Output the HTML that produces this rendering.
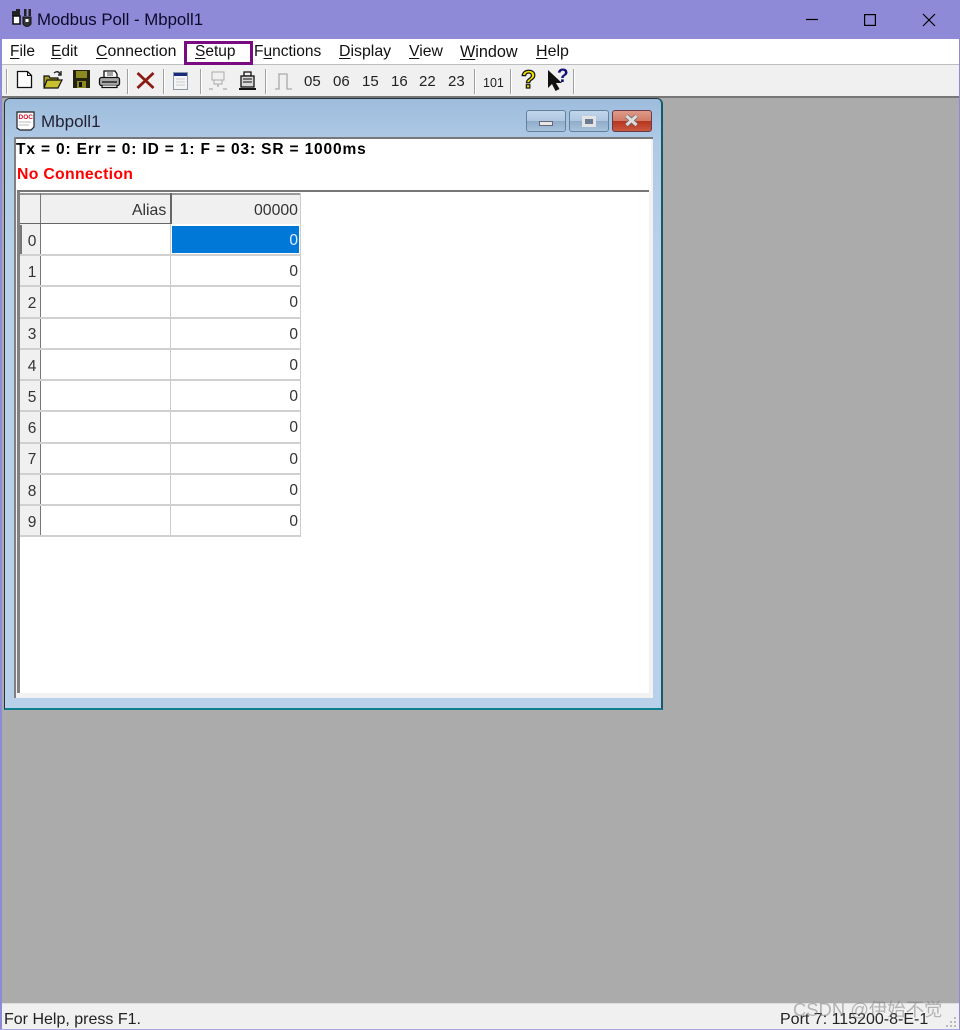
<!DOCTYPE html>
<html><head><meta charset="utf-8"><style>
html,body{margin:0;padding:0;width:960px;height:1030px;overflow:hidden;background:#ababab;font-family:"Liberation Sans","Noto Sans CJK SC",sans-serif;color:#111}
.a{position:absolute}
.t{position:absolute;white-space:nowrap;line-height:18px;font-size:15.500px}
.t u{text-underline-offset:2px}
.tb{position:absolute;top:73px;font-size:15px;line-height:18px;color:#222}
.sep{position:absolute;top:69px;width:1px;height:25px;background:#a0a0a0;border-right:1px solid #fff}
.rh{position:absolute;left:22px;width:20px;text-align:center;font-size:15.500px;line-height:18px;color:#333}
.v{position:absolute;left:171px;width:127px;text-align:right;font-size:15.500px;line-height:18px;color:#333}
.hl{position:absolute;left:20px;width:281px;height:2px;background:#d0d0d0}
.rb{position:absolute;left:20px;width:21px;background:#f0f0f0}
</style></head><body>
<div class="a" style="left:0;top:0;width:960px;height:39px;background:#8e8ad8"></div>
<svg class="a" style="left:10px;top:8px" width="24" height="24" viewBox="0 0 24 24"><path d="M2 3h4v5H2zM6 1h4v7H6zM14 1h2.500v7H14zM18.500 1H21v7h-2.500z" fill="#222"/><path d="M3 8h7v8H3z" fill="#fff" stroke="#111" stroke-width="1.600"/><path d="M13 9h8v7q-4 5-8 0z" fill="#333" stroke="#111"/><path d="M15.500 11h3v3h-3z" fill="#fff"/></svg>
<div class="t" style="left:37px;top:11px;font-size:16.800px;color:#0a0a2a">Modbus Poll - Mbpoll1</div>
<svg class="a" style="left:780px;top:0" width="180" height="39" viewBox="0 0 180 39" fill="none" stroke="#000" stroke-width="1.200"><path d="M26 19.500h12"/><rect x="84.600" y="14.600" width="10.800" height="10.800"/><path d="M143 14l12 12M155 14l-12 12"/></svg>

<div class="a" style="left:0;top:39px;width:960px;height:25px;background:#fff"></div>
<div class="a" style="left:0;top:64px;width:960px;height:1px;background:#bdbdbd"></div>
<div class="a" style="left:0;top:65px;width:960px;height:31px;background:#f0f0f0"></div>
<div class="a" style="left:0;top:96px;width:960px;height:2px;background:#777"></div>
<div class="a" style="left:0;top:39px;width:2px;height:991px;background:#8e8ad8"></div>
<div class="a" style="left:959px;top:39px;width:1px;height:991px;background:#8e8ad8"></div>

<div class="t" style="left:10px;top:43px"><u>F</u>ile</div>
<div class="t" style="left:51px;top:43px"><u>E</u>dit</div>
<div class="t" style="left:96px;top:43px;font-size:15.900px"><u>C</u>onnection</div>
<div class="t" style="left:195px;top:43px"><u>S</u>etup</div>
<div class="t" style="left:254px;top:43px;font-size:15.500px">F<u>u</u>nctions</div>
<div class="t" style="left:339px;top:43px;font-size:15.900px"><u>D</u>isplay</div>
<div class="t" style="left:409px;top:43px;font-size:15.800px"><u>V</u>iew</div>
<div class="t" style="left:460px;top:43px;font-size:16.200px"><u>W</u>indow</div>
<div class="t" style="left:536px;top:43px;font-size:16px"><u>H</u>elp</div>
<div class="a" style="left:184px;top:41px;width:63px;height:18px;border:3px solid #7a0a82"></div>

<div class="sep" style="left:6px"></div>
<div class="sep" style="left:127px"></div>
<div class="sep" style="left:163px"></div>
<div class="sep" style="left:200px"></div>
<div class="sep" style="left:265px"></div>
<div class="sep" style="left:474px"></div>
<div class="sep" style="left:510px"></div>
<div class="sep" style="left:573px"></div>

<svg class="a" style="left:0;top:65px" width="300" height="31" viewBox="0 0 300 31">
<path d="M17.500 6.500h10l4 4v12h-14z" fill="#fff" stroke="#111" stroke-width="1.300"/><path d="M27.500 6.500v4h4" fill="none" stroke="#111"/>
<path d="M44 22V11h5l1 2h8v3" fill="#a8a020" stroke="#111" stroke-width="1.200"/><path d="M44 23l3-8h15l-4 8z" fill="#c8c030" stroke="#111" stroke-width="1.200"/><path d="M54 8q4-3 6 1M61 6v4h-3" fill="none" stroke="#222" stroke-width="1.400"/>
<rect x="73" y="5" width="17" height="18" fill="#23230f"/><rect x="76" y="6" width="11" height="7" fill="#8a8a20"/><rect x="77" y="16" width="9" height="7" fill="#8a8a20"/><rect x="79" y="17" width="3" height="5" fill="#111"/>
<path d="M104 12V6h11l2 3v3" fill="#fff" stroke="#111" stroke-width="1.300"/><rect x="99.500" y="12.500" width="20" height="8" rx="2" fill="#aaa" stroke="#111" stroke-width="1.300"/><path d="M102 20.500v2h15v-2" fill="#fff" stroke="#111" stroke-width="1.300"/><path d="M107 8h6M107 10h6" stroke="#444"/><path d="M102 17h15" stroke="#222" stroke-width="1.500"/>
<path d="M137.500 8l16 15M153.500 8l-16 15" stroke="#8a1a14" stroke-width="2.800" fill="none"/>
<rect x="173.500" y="7.500" width="14" height="17" fill="#f4f4f4" stroke="#8a9aa8"/><rect x="174" y="8" width="13" height="3" fill="#1a2a80"/><path d="M176 14h9M176 17h9M176 20h9" stroke="#ccc"/>
<path d="M212 7h12v8h-12zM214 15h8v4h-8z" fill="none" stroke="#aaa"/><path d="M209 24h4M223 24h4M218 19v3" stroke="#aaa" stroke-width="1.300"/>
<path d="M244 7h7v4h-7z" fill="none" stroke="#111" stroke-width="1.300"/><rect x="241" y="11" width="13" height="11" fill="#d8d8d8" stroke="#111" stroke-width="1.300"/><path d="M243 14h9M243 17h9" stroke="#111"/><path d="M239 24h17" stroke="#111" stroke-width="2"/>
<path d="M275 24h4V9h8v15h5" fill="none" stroke="#aaa" stroke-width="1.300"/>
</svg>
<div class="tb" style="left:304px">05</div>
<div class="tb" style="left:333px">06</div>
<div class="tb" style="left:362px">15</div>
<div class="tb" style="left:391px">16</div>
<div class="tb" style="left:419px">22</div>
<div class="tb" style="left:448px">23</div>
<div class="tb" style="left:483px;top:74px;font-size:12.500px">101</div>
<div class="a" style="left:521px;top:66px;font-size:25px;line-height:28px;font-weight:bold;color:#e8e000;-webkit-text-stroke:1.200px #111">?</div>
<svg class="a" style="left:546px;top:68px" width="24" height="24" viewBox="0 0 24 24"><path d="M2 2v18l4-4 3.500 7 4-2-3.500-6h6z" fill="#111"/></svg>
<div class="a" style="left:557px;top:65px;font-size:19px;line-height:24px;font-weight:bold;color:#10107a">?</div>

<!-- child window -->
<div class="a" style="left:4px;top:98px;width:656px;height:609px;border:1px solid #20343c;border-bottom:2px solid #0f7f8f;border-right:2px solid #155a68;border-radius:6px 6px 0 0;background:#b8d0ea"></div>
<div class="a" style="left:5px;top:99px;width:656px;height:150px;background:linear-gradient(180deg,#9dbcdc 0,#b0cae6 30%,#b8d0ea 100%);border-radius:5px 5px 0 0"></div>
<svg class="a" style="left:15px;top:110px" width="22" height="22" viewBox="0 0 22 22"><path d="M2 2h17v15l-3 3H5l-3-2z" fill="#fff" stroke="#222" stroke-width="1.200"/><text x="3.500" y="9" font-family="Liberation Sans" font-size="6.500" font-weight="bold" fill="#d01020">DOC</text><path d="M4 12h12M4 15h10" stroke="#bbb"/></svg>
<div class="t" style="left:41px;top:113px;font-size:17px;color:#223">Mbpoll1</div>

<div class="a" style="left:526px;top:110px;width:38px;height:20px;border:1px solid #64809c;border-radius:3px;background:linear-gradient(180deg,#c0d6ec 0,#aec6e0 50%,#90acc8 51%,#a8c2dc 100%)"></div>
<div class="a" style="left:539px;top:121px;width:12px;height:3px;background:#e8e8e8;border:1px solid #667"></div>
<div class="a" style="left:569px;top:110px;width:38px;height:20px;border:1px solid #64809c;border-radius:3px;background:linear-gradient(180deg,#c0d6ec 0,#aec6e0 50%,#90acc8 51%,#a8c2dc 100%)"></div>
<div class="a" style="left:582px;top:116px;width:8px;height:5px;border:3px solid #e4e4e4;background:#6a7a90"></div>
<div class="a" style="left:612px;top:110px;width:38px;height:20px;border:1px solid #6a3a4a;border-radius:3px;background:linear-gradient(180deg,#e09a88 0,#d07a68 50%,#b8341e 51%,#c85a40 100%)"></div>
<svg class="a" style="left:623px;top:113px" width="18" height="16" viewBox="0 0 18 16"><path d="M3.500 3l10 9M13.500 3l-10 9" stroke="#666" stroke-width="4.500"/><path d="M3.500 3l10 9M13.500 3l-10 9" stroke="#ddd" stroke-width="3"/></svg>

<!-- client area -->
<div class="a" style="left:14px;top:137px;width:639px;height:561px;background:#f2f2f2"></div>
<div class="a" style="left:14px;top:137px;width:639px;height:2px;background:#777"></div>
<div class="a" style="left:14px;top:137px;width:2px;height:561px;background:#808080"></div>
<div class="a" style="left:16px;top:139px;width:635px;height:52px;background:#fff"></div>
<div class="a" style="left:17px;top:190px;width:3px;height:503px;background:#808080"></div>
<div class="a" style="left:17px;top:190px;width:632px;height:2px;background:#777"></div>
<div class="a" style="left:20px;top:192px;width:629px;height:501px;background:#fff"></div>
<div class="t" style="left:16px;top:141px;font-weight:bold;font-size:15.500px;letter-spacing:.85px;color:#000">Tx = 0: Err = 0: ID = 1: F = 03: SR = 1000ms</div>
<div class="t" style="left:17px;top:166px;font-weight:bold;font-size:15.800px;letter-spacing:.3px;color:#f00">No Connection</div>

<!-- grid -->
<div class="a" style="left:20px;top:193px;width:281px;height:31px;background:#f0f0f0"></div>
<div class="a" style="left:20px;top:193px;width:281px;height:2px;background:#999"></div>
<div class="a" style="left:40px;top:193px;width:1px;height:31px;background:#777"></div>
<div class="a" style="left:170px;top:193px;width:2px;height:31px;background:#666"></div>
<div class="a" style="left:20px;top:223px;width:151px;height:1px;background:#666"></div>
<div class="t" style="left:132px;top:202px;color:#333;font-size:15.800px">Alias</div>
<div class="t" style="left:254px;top:202px;color:#333;font-size:15.800px">00000</div>

<div class="rb" style="top:224px;height:311px"></div>
<div class="a" style="left:40px;top:224px;width:1px;height:312px;background:#777"></div>
<div class="a" style="left:20px;top:225px;width:2px;height:29px;background:#777"></div>
<div class="a" style="left:170px;top:224px;width:1px;height:312px;background:#ccc"></div>
<div class="a" style="left:300px;top:193px;width:1px;height:343px;background:#ccc"></div>
<div class="hl" style="top:254px"></div><div class="hl" style="top:285px"></div><div class="hl" style="top:317px"></div><div class="hl" style="top:348px"></div><div class="hl" style="top:379px"></div><div class="hl" style="top:410px"></div><div class="hl" style="top:442px"></div><div class="hl" style="top:473px"></div><div class="hl" style="top:504px"></div><div class="hl" style="top:535px"></div>
<div class="a" style="left:172px;top:226px;width:127px;height:27px;background:#0078d7"></div>

<div class="rh" style="top:233px">0</div><div class="rh" style="top:264px">1</div><div class="rh" style="top:295px">2</div><div class="rh" style="top:326px">3</div><div class="rh" style="top:358px">4</div><div class="rh" style="top:389px">5</div><div class="rh" style="top:420px">6</div><div class="rh" style="top:451px">7</div><div class="rh" style="top:483px">8</div><div class="rh" style="top:514px">9</div>
<div class="v" style="top:232px;color:#dfeeff">0</div><div class="v" style="top:263px">0</div><div class="v" style="top:294px">0</div><div class="v" style="top:326px">0</div><div class="v" style="top:357px">0</div><div class="v" style="top:388px">0</div><div class="v" style="top:419px">0</div><div class="v" style="top:451px">0</div><div class="v" style="top:482px">0</div><div class="v" style="top:513px">0</div>

<!-- status bar -->
<div class="a" style="left:2px;top:1003px;width:957px;height:26px;background:#f0f0f0;border-top:1px solid #ddd;box-sizing:border-box"></div>
<div class="a" style="left:0;top:1029px;width:960px;height:1px;background:#a8a6e0"></div>
<div class="t" style="left:4px;top:1011px;color:#222;font-size:16px">For Help, press F1.</div>
<div class="t" style="left:780px;top:1011px;color:#222;font-size:16px">Port 7: 115200-8-E-1</div>
<div class="t" style="left:793px;top:999px;font-size:18.400px;line-height:22px;color:rgba(120,120,120,.5)">CSDN @伊始不觉</div>
<svg class="a" style="left:945px;top:1015px" width="14" height="14"><path d="M9 2h2v2H9zM5 6h2v2H5zM9 6h2v2H9zM1 10h2v2H1zM5 10h2v2H5zM9 10h2v2H9z" fill="#bbb"/></svg>
</body></html>
